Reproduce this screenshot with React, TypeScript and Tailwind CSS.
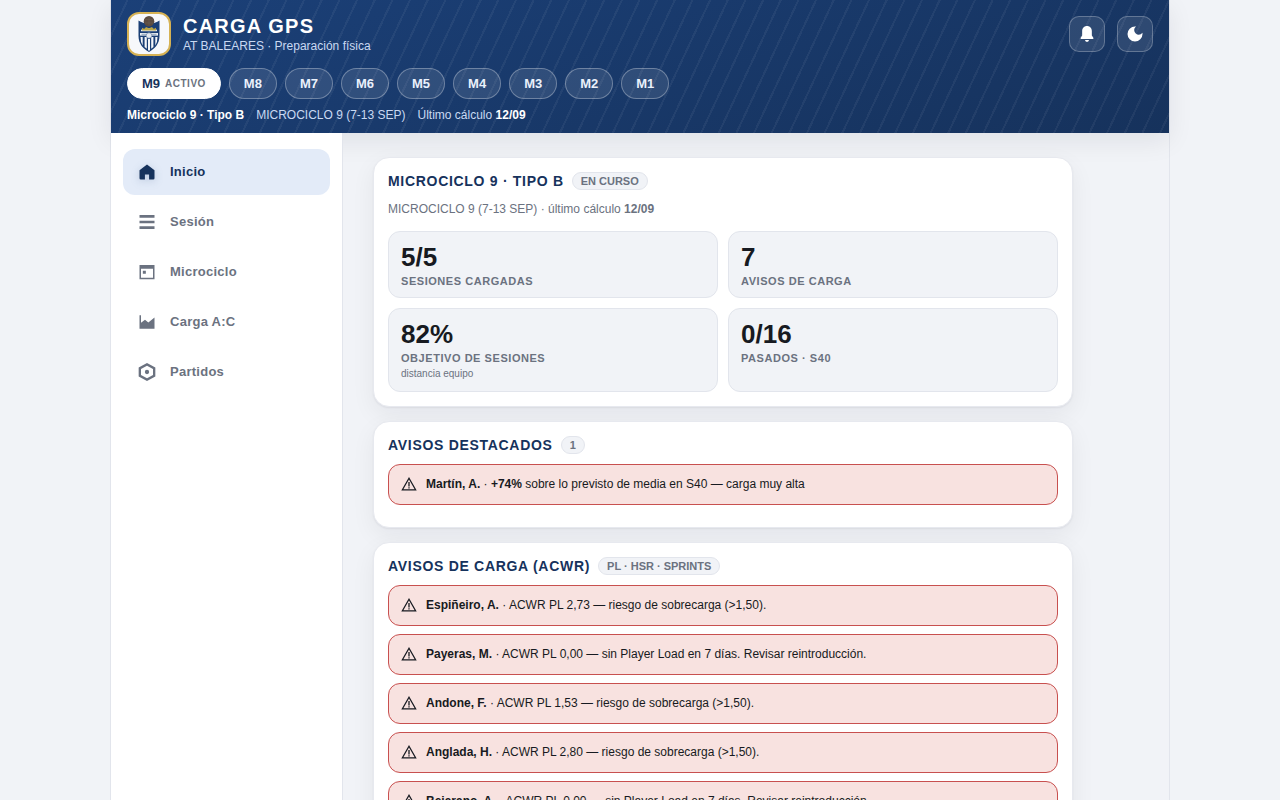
import { useState } from 'react';
import type { ReactNode } from 'react';

type Tab = 'inicio' | 'sesion' | 'microciclo' | 'carga' | 'partidos';

const MICROCYCLES = ['M9', 'M8', 'M7', 'M6', 'M5', 'M4', 'M3', 'M2', 'M1'];

const NAV: { id: Tab; label: string; icon: ReactNode }[] = [
  {
    id: 'inicio',
    label: 'Inicio',
    icon: <path d="M12 3 3 10v9.5Q3 21 4.500 21H9.500v-6h5v6h5q1.500 0 1.500-1.500V10z" />,
  },
  {
    id: 'sesion',
    label: 'Sesión',
    icon: <path d="M3 3.600h18v3.200H3zM3 10.400h18v3.200H3zM3 17.200h18v3.200H3z" />,
  },
  {
    id: 'microciclo',
    label: 'Microciclo',
    icon: <path fillRule="evenodd" d="M3 3.600h18v17H3zM4.800 8v10.800h14.400V8zM7 10.500h3.600v3.500H7z" />,
  },
  { id: 'carga', label: 'Carga A:C', icon: <path d="M3 4h1.800v9l4.800-3.800 4 3.500 7.400-6V20.200H3z" /> },
  {
    id: 'partidos',
    label: 'Partidos',
    icon: (
      <path
        fillRule="evenodd"
        d="M12 1.200 22 6.700v10.600l-10 5.500-10-5.500V6.700zM12 4.400 4.800 8.400v7.200l7.200 4 7.200-4V8.400zM12 9.400a2.600 2.600 0 1 1 0 5.200 2.600 2.600 0 0 1 0-5.200z"
      />
    ),
  },
];

const STATS = [
  { value: '5/5', label: 'Sesiones cargadas' },
  { value: '7', label: 'Avisos de carga' },
  { value: '82%', label: 'Objetivo de sesiones', note: 'distancia equipo' },
  { value: '0/16', label: 'Pasados · S40' },
];

const ACWR = [
  { player: 'Espiñeiro, A.', text: 'ACWR PL 2,73 — riesgo de sobrecarga (>1,50).' },
  { player: 'Payeras, M.', text: 'ACWR PL 0,00 — sin Player Load en 7 días. Revisar reintroducción.' },
  { player: 'Andone, F.', text: 'ACWR PL 1,53 — riesgo de sobrecarga (>1,50).' },
  { player: 'Anglada, H.', text: 'ACWR PL 2,80 — riesgo de sobrecarga (>1,50).' },
  { player: 'Bejarano, A.', text: 'ACWR PL 0,00 — sin Player Load en 7 días. Revisar reintroducción.' },
];

function Crest() {
  return (
    <svg viewBox="0 0 40 40" className="w-full h-full" role="img" aria-label="Escudo">
      {/* shield */}
      <path d="M9.500 6.500q4 3 10.500 3t10.500-3v15.500c0 8-5 13-10.500 16C14.500 35 9.500 30 9.500 22z" fill="#1b3f75" />
      {/* crown band */}
      <path d="M12 15.800q8-3 16 0v1.500H12z" fill="#e8ecf2" />
      <path d="M13 16.500v-2.800l2.300 1.300 1.700-2 3 1.300 3-1.300 1.700 2 2.300-1.300v2.800z" fill="#bba545" />
      <path d="M11 19h18v2.600H11z" fill="#eef1f5" />
      {/* stripes */}
      <path
        d="M11.500 23h2.200v8.500q-2.200-3-2.200-8.500zM15.600 23h2.200v11.800l-2.200-1.700zM19 25h2v11.200l-1 .6-1-.6zM22.200 23h2.200v10.100l-2.200 1.700zM26.300 23h2.200q0 5.500-2.200 8.500z"
        fill="#f4f6f9"
      />
      <circle cx="20" cy="21.500" r="2.800" fill="#e4e9f0" stroke="#6f87aa" strokeWidth=".7" />
      <path d="M12.500 20.300h5M22.500 20.300h5" stroke="#7a90b0" strokeWidth=".8" />
      {/* ball */}
      <circle cx="20" cy="7.200" r="5.300" fill="#5b4b40" />
      <path d="M16 5.500h8M16 9h8M20 2.500v9" stroke="#6f6055" strokeWidth=".5" />
    </svg>
  );
}

function Pill({ children }: { children: ReactNode }) {
  return (
    <span className="h-[18px] px-2 flex items-center rounded-full border border-[#e2e5ec] bg-[#f1f3f7] text-[11px] leading-4 font-bold text-[#6b7280]">
      {children}
    </span>
  );
}

function Card({ title, tag, children }: { title: string; tag: string; children: ReactNode }) {
  return (
    <section className="rounded-2xl border border-[#e7e9ef] bg-white p-3.5 shadow-[0_1px_2px_rgba(16,24,40,0.06),0_8px_24px_rgba(16,24,40,0.06)]">
      <div className="flex items-center gap-2 mb-2.5">
        <h2 className="text-[14px] leading-[18px] font-bold uppercase tracking-[0.05em] text-[#16325c]">{title}</h2>
        <Pill>{tag}</Pill>
      </div>
      {children}
    </section>
  );
}

function Alert({ children }: { children: ReactNode }) {
  return (
    <li className="flex items-start gap-[9px] mb-2 px-3 py-[9px] rounded-xl border border-[#c8504f] bg-[#f8e2e0] text-[12px] leading-[21px] text-[#171a21]">
      <svg viewBox="0 0 16 16" className="w-4 h-5 shrink-0" fill="none" stroke="currentColor" aria-hidden="true">
        <path d="M8 2.200 1.400 13.800h13.200z" strokeWidth="1.300" />
        <path d="M8 6v4.500M8 11.300v1.300" strokeWidth="1.300" />
      </svg>
      <span>{children}</span>
    </li>
  );
}

export default function App() {
  const [tab, setTab] = useState<Tab>('inicio');
  const [cycle, setCycle] = useState('M9');

  const iconButton =
    'w-9 h-9 flex items-center justify-center rounded-[10px] border border-white/25 bg-white/10 text-white cursor-pointer';

  return (
    <div className="min-h-screen bg-[#f1f3f7] font-['Liberation_Sans',Arial,sans-serif] text-[#171a21]">
      <div className="max-w-[1060px] min-h-screen mx-auto flex flex-col border-x border-[#e2e5ec]">
        <header className="px-4 pt-3 pb-2.5 text-white bg-[repeating-linear-gradient(115deg,transparent_0_14px,rgba(255,255,255,0.05)_14px_16px),linear-gradient(160deg,#1b4078,#16325c)] shadow-[0_8px_24px_rgba(16,24,40,0.08)]">
          <div className="flex items-center gap-3">
            <div className="w-11 h-11 shrink-0 rounded-xl border-2 border-[#d6b254] bg-[#f7f8fb]">
              <Crest />
            </div>
            <div className="flex-1">
              <h1 className="text-[20px] leading-6 font-bold tracking-[0.06em]">CARGA GPS</h1>
              <p className="text-[12px] leading-4 text-[#c9d9f2]">AT BALEARES · Preparación física</p>
            </div>
            <div className="flex gap-3">
              <button className={iconButton} aria-label="Avisos">
                <svg viewBox="0 0 24 24" className="w-5 h-5 fill-current" aria-hidden="true">
                  <path d="M12 2.400c-3.500 0-5.800 2.600-5.800 6v5.300L4.400 16.500V18h15.200v-1.500l-1.800-2.800V8.400c0-3.400-2.300-6-5.800-6zM9.600 19.300h4.800a2.400 2.200 0 0 1-4.800 0z" />
                </svg>
              </button>
              <button className={iconButton} aria-label="Modo oscuro">
                <svg viewBox="0 0 24 24" className="w-5 h-5 fill-current" aria-hidden="true">
                  <path d="M12 3a9 9 0 1 0 9 9c0-.460-.040-.920-.100-1.360a5.390 5.390 0 0 1-4.400 2.260 5.400 5.400 0 0 1-3.140-9.800C12.920 3.040 12.460 3 12 3z" />
                </svg>
              </button>
            </div>
          </div>

          <div className="flex flex-wrap gap-2 mt-3">
            {MICROCYCLES.map((m) => (
              <button
                key={m}
                onClick={() => setCycle(m)}
                className={`h-[31px] px-3.5 flex items-center gap-[5px] rounded-full border text-[13px] font-bold cursor-pointer ${
                  m === cycle ? 'border-white bg-white text-[#16325c]' : 'border-white/30 bg-white/10 text-[#eaf1fc]'
                }`}
              >
                {m}
                {m === 'M9' && <span className="text-[10px] tracking-[0.05em] text-[#6b7280]">ACTIVO</span>}
              </button>
            ))}
          </div>

          <div className="flex flex-wrap gap-3 mt-2 text-[12px] leading-4 text-[#c9d9f2]">
            <b className="text-white">Microciclo 9 · Tipo B</b>
            <span>MICROCICLO 9 (7-13 SEP)</span>
            <span>
              Último cálculo <b className="text-white">12/09</b>
            </span>
          </div>
        </header>

        <div className="flex-1 flex">
          <nav className="w-[232px] shrink-0 flex flex-col gap-1 px-3 py-4 border-r border-[#e2e5ec] bg-white">
            {NAV.map((item) => (
              <button
                key={item.id}
                onClick={() => setTab(item.id)}
                className={`h-[46px] px-3.5 flex items-center gap-[13px] rounded-xl text-[13px] font-bold tracking-[0.02em] cursor-pointer ${
                  item.id === tab ? 'bg-[#e3ebf8] text-[#16325c]' : 'text-[#6b7280]'
                }`}
              >
                <svg
                  viewBox="0 0 24 24"
                  className={`w-5 h-5 fill-current ${item.id === tab ? 'drop-shadow-[0_2px_4px_rgba(29,68,124,0.2)]' : ''}`}
                  aria-hidden="true"
                >
                  {item.icon}
                </svg>
                {item.label}
              </button>
            ))}
          </nav>

          <main className="flex-1 max-w-[760px] px-[30px] pt-6 pb-10 flex flex-col gap-3.5">
            <Card title="Microciclo 9 · Tipo B" tag="EN CURSO">
              <p className="mb-3 text-[12px] leading-[19px] text-[#6b7280]">
                MICROCICLO 9 (7-13 SEP) · último cálculo <b>12/09</b>
              </p>
              <div className="grid grid-cols-2 gap-2.5">
                {STATS.map((s) => (
                  <div key={s.label} className="px-3 py-2.5 rounded-xl border border-[#e2e5ec] bg-[#f1f3f7]">
                    <div className="text-[26px] leading-[30px] font-bold">{s.value}</div>
                    <div className="mt-[3px] text-[11px] leading-3 font-bold uppercase tracking-[0.05em] text-[#6b7280]">
                      {s.label}
                    </div>
                    {s.note && <div className="mt-[3px] text-[10px] leading-[14px] text-[#6b7280]">{s.note}</div>}
                  </div>
                ))}
              </div>
            </Card>

            <Card title="Avisos destacados" tag="1">
              <ul>
                <Alert>
                  <b>Martín, A.</b> · <b>+74%</b> sobre lo previsto de media en S40 — carga muy alta
                </Alert>
              </ul>
            </Card>

            <Card title="Avisos de carga (ACWR)" tag="PL · HSR · SPRINTS">
              <ul>
                {ACWR.map((a) => (
                  <Alert key={a.player}>
                    <b>{a.player}</b> · {a.text}
                  </Alert>
                ))}
              </ul>
            </Card>
          </main>
        </div>
      </div>
    </div>
  );
}
